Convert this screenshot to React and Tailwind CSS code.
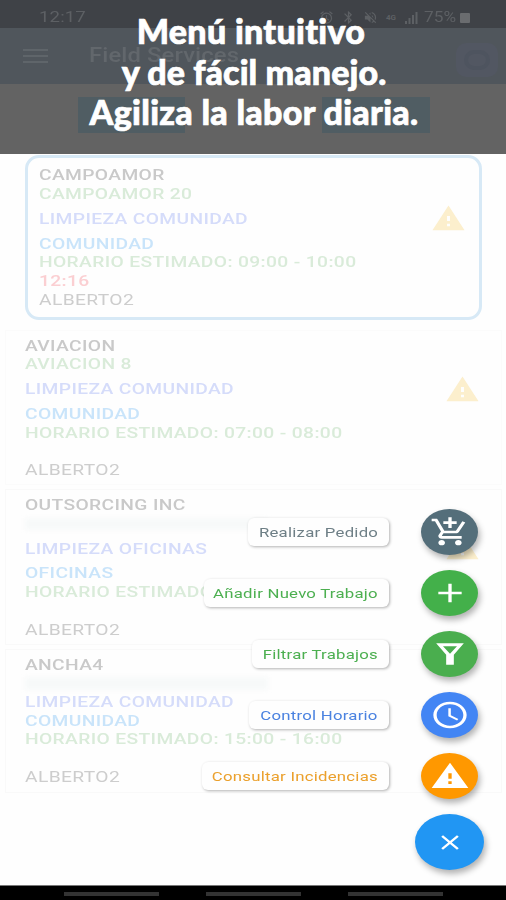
import React from 'react';
import {
  MdAccessTime,
  MdAdd,
  MdAddShoppingCart,
  MdAlarm,
  MdBluetooth,
  MdClose,
  MdVolumeOff,
  MdWarning,
} from 'react-icons/md';

const FilterIcon = (props) => (
  <svg viewBox="0 0 24 24" fill="currentColor" {...props}>
    <path fillRule="evenodd" d="M3.700 4h16.600L14.300 12.500V20H9.700v-7.500L3.700 4zm4.100 2.100 4.200 5.700 4.200-5.700H7.800z" />
  </svg>
);

const jobs = [
  {
    name: 'CAMPOAMOR',
    address: 'CAMPOAMOR 20',
    service: 'LIMPIEZA COMUNIDAD',
    type: 'COMUNIDAD',
    schedule: 'HORARIO ESTIMADO: 09:00 - 10:00',
    started: '12:16',
    box: 'ml-[25px] w-[457px] h-[165px] rounded-[14px] border-[3px] border-[#d7e9f6] pl-[11px] pt-[8px]',
    serviceBox: 'my-[6.3px]',
    warning: 'right-[13px] top-[45px]',
  },
  {
    name: 'AVIACION',
    address: 'AVIACION 8',
    service: 'LIMPIEZA COMUNIDAD',
    type: 'COMUNIDAD',
    schedule: 'HORARIO ESTIMADO: 07:00 - 08:00',
    box: 'ml-[5px] mt-[10px] w-[497px] h-[155px] border border-[#fbfbfb] pl-[19px] pt-[5.5px]',
    serviceBox: 'my-[6.2px]',
    warning: 'right-[21px] top-[43px]',
  },
  {
    name: 'OUTSORCING INC',
    service: 'LIMPIEZA OFICINAS',
    type: 'OFICINAS',
    schedule: 'HORARIO ESTIMADO: 10:00 - 11:00',
    box: 'ml-[5px] mt-[4px] w-[497px] h-[156px] border border-[#f9f9f9] pl-[19px] pt-[6px]',
    serviceBox: 'my-[6.2px]',
    warning: 'right-[21px] top-[42px]',
  },
  {
    name: 'ANCHA4',
    service: 'LIMPIEZA COMUNIDAD',
    type: 'COMUNIDAD',
    schedule: 'HORARIO ESTIMADO: 15:00 - 16:00',
    box: 'ml-[5px] mt-[4px] w-[497px] h-[144px] border border-[#f9f9f9] pl-[19px] pt-[5.5px]',
    serviceBox: '',
  },
];

const actions = [
  { label: 'Realizar Pedido', Icon: MdAddShoppingCart, width: 'w-[141px]', text: 'text-[#6e7f86]', bg: 'bg-[#546e7a]' },
  { label: 'Añadir Nuevo Trabajo', Icon: MdAdd, width: 'w-[185px]', text: 'text-[#4caf50]', bg: 'bg-[#43b04a]' },
  { label: 'Filtrar Trabajos', Icon: FilterIcon, width: 'w-[137px]', text: 'text-[#4caf50]', bg: 'bg-[#4aae4e]' },
  { label: 'Control Horario', Icon: MdAccessTime, width: 'w-[140px]', text: 'text-[#4a82e0]', bg: 'bg-[#4285f4]' },
  { label: 'Consultar Incidencias', Icon: MdWarning, width: 'w-[187px]', text: 'text-[#eba02c]', bg: 'bg-[#ff9800]' },
];

const Line = ({ className, children }) => (
  <p className={`h-[18.7px] w-max origin-left scale-x-[1.24] whitespace-nowrap text-[15.5px] leading-[18.7px] tracking-[0.3px] ${className}`}>
    {children}
  </p>
);

const JobCard = ({ job }) => (
  <div className={`relative shrink-0 ${job.box}`}>
    <Line className="font-medium text-[#c9c9c9]">{job.name}</Line>
    {job.address ? (
      <Line className="font-medium text-[#d9ebd9]">{job.address}</Line>
    ) : (
      <div className="h-[18.7px] py-[3px]">
        <div className="h-full w-[243px] bg-[#f7f9f9] blur-[2px]" />
      </div>
    )}
    <Line className={`font-medium text-[#d5dcfa] ${job.serviceBox}`}>{job.service}</Line>
    <Line className="font-medium text-[#c9e4fa]">{job.type}</Line>
    <Line className="font-medium text-[#d9ebd9]">{job.schedule}</Line>
    <Line className="font-medium text-[#fbcfd2]">{job.started}</Line>
    <Line className="text-[#cdcdcd]">ALBERTO2</Line>
    {job.warning && (
      <MdWarning preserveAspectRatio="none" className={`absolute h-[31px] w-[35px] text-[#fcefcd] ${job.warning}`} />
    )}
  </div>
);

const App = () => {
  return (
    <div className="relative flex h-[900px] w-[506px] flex-col overflow-hidden bg-[#fefefe] font-['Roboto',sans-serif]">
      {/* Dimmed phone header */}
      <div className="h-[154px] shrink-0 bg-[#636363]">
        <div className="flex h-[28px] items-center justify-between bg-[#3f4247] pl-[39px] pr-[36px] pt-[7px] text-[#5d6064]">
          <span className="origin-left scale-x-[1.24] text-[15px] tracking-[0.1px]">12:17</span>
          <div className="flex items-center gap-[7px]">
            <MdAlarm className="size-[15px]" />
            <MdBluetooth className="size-[15px]" />
            <MdVolumeOff className="size-[15px]" />
            <span className="w-[12px] text-center text-[8px] font-bold leading-[7px]">4G</span>
            <svg viewBox="0 0 14 12" className="h-[12px] w-[14px]" fill="currentColor">
              <path d="M1 9h2v3H1zM4.500 6h2v6h-2zM8 3h2v9H8zM11.500 0h2v12h-2z" />
            </svg>
            <span className="-ml-[1px] w-[34px] origin-left scale-x-[1.15] text-[15px]">75%</span>
            <div className="-ml-[5px] h-[10px] w-[10px] rounded-[1px] bg-[#6a6c6f]" />
          </div>
        </div>
        <div className="flex h-[56px] items-center justify-between bg-[#50565c] pl-[23px] pr-[8px]">
          <div className="flex items-center">
            <div className="flex w-[25px] flex-col gap-[4px]">
              <div className="h-[2px] bg-[#5f656a]" />
              <div className="h-[2px] bg-[#5f656a]" />
              <div className="h-[2px] bg-[#5f656a]" />
            </div>
            <span className="ml-[41px] origin-left scale-x-[1.22] text-[19.5px] font-medium tracking-[0.1px] text-[#62676c]">Field Services</span>
          </div>
          <div className="mt-[8px] flex h-[34px] w-[42px] items-center justify-center rounded-[10px] bg-[#525762]">
            <div className="h-[20px] w-[26px] rounded-full border-4 border-[#4e545f]" />
          </div>
        </div>
        <div className="flex gap-[137px] pl-[78px] pt-[13px]">
          <div className="h-[36px] w-[107px] bg-[#505d63]" />
          <div className="h-[36px] w-[108px] bg-[#505d63]" />
        </div>
      </div>

      {/* Job list */}
      <div className="flex flex-1 flex-col pt-px">
        {jobs.map((job) => (
          <JobCard key={job.name} job={job} />
        ))}
      </div>

      {/* Navigation bar */}
      <div className="flex h-[15px] shrink-0 justify-center gap-[47px] border-t border-[#777] bg-black pt-[6px]">
        <div className="h-[4px] w-[95px] bg-[#333]" />
        <div className="h-[4px] w-[95px] bg-[#333]" />
        <div className="h-[4px] w-[95px] bg-[#333]" />
      </div>

      {/* Caption */}
      <div className="absolute inset-x-0 top-0 flex flex-col items-center pt-[11px] font-['Lato',sans-serif] text-[34px] font-black leading-[40.7px] tracking-[0.3px] text-white [-webkit-text-stroke:0.7px_white]">
        <p className="mr-[4px] whitespace-nowrap">Menú intuitivo</p>
        <p className="ml-[2px] whitespace-nowrap tracking-[0.1px]">y de fácil manejo.</p>
        <p className="ml-[2px] whitespace-nowrap">Agiliza la labor diaria.</p>
      </div>

      {/* Speed dial */}
      <div className="absolute right-[22px] top-[509px] flex flex-col items-end">
        {actions.map(({ label, Icon, width, text, bg }) => (
          <div key={label} className="flex h-[61px] items-start gap-[31px] pr-[6px]">
            <div className={`mt-[9px] flex h-[28px] items-center justify-end rounded-[6px] bg-[#fefefe] pr-[11px] pt-px shadow-[1px_1px_3px_rgba(0,0,0,0.3)] -translate-x-px ${width}`}>
              <span className={`origin-right scale-x-[1.24] whitespace-nowrap text-[13.500px] tracking-[0.2px] ${text}`}>{label}</span>
            </div>
            <button className={`flex h-[46px] w-[57px] items-center justify-center rounded-[50%] text-white shadow-[2px_4px_6px_rgba(0,0,0,0.3)] ${bg}`}>
              <Icon preserveAspectRatio="none" className="h-[32px] w-[40px]" />
            </button>
          </div>
        ))}
        <button className="flex h-[56px] w-[69px] items-center justify-center rounded-[50%] bg-[#2196f3] text-white shadow-[2px_4px_6px_rgba(0,0,0,0.3)]">
          <MdClose preserveAspectRatio="none" className="h-[25px] w-[30px]" />
        </button>
      </div>
    </div>
  );
};

export default App;
